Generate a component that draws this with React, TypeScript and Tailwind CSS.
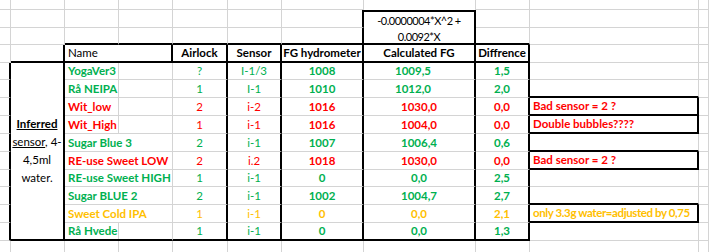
import React, { ReactNode } from "react";

type Bd = "g" | "k" | "t" | "n";

const rCls = (r: Bd) =>
  r === "k"
    ? "border-r-2 border-r-black"
    : r === "t"
    ? "border-r border-r-black"
    : r === "g"
    ? "border-r border-r-[#d4d4d4]"
    : "";
const bCls = (b: Bd) =>
  b === "k"
    ? "border-b-2 border-b-black"
    : b === "t"
    ? "border-b border-b-black"
    : b === "g"
    ? "border-b border-b-[#d4d4d4]"
    : "";

function Cell({
  r = "g",
  b = "g",
  cls = "",
  children,
}: {
  r?: Bd;
  b?: Bd;
  cls?: string;
  children?: ReactNode;
}) {
  return (
    <div className={`flex min-w-0 items-center whitespace-nowrap ${rCls(r)} ${bCls(b)} ${cls}`}>
      {children}
    </div>
  );
}

type Tone = "green" | "red" | "orange";
const tone: Record<Tone, string> = {
  green: "text-[#00b050]",
  red: "text-[#ff0000]",
  orange: "text-[#ffc000]",
};

type Row = {
  name: string;
  air: string;
  sensor: string;
  fg: string;
  calc: string;
  diff: string;
  note?: string;
  t: Tone;
  short?: boolean;
  shiftCalc?: boolean;
  tightNote?: boolean;
};

const rows: Row[] = [
  { name: "YogaVer3", air: "?", sensor: "I-1/3", fg: "1008", calc: "1009,5", diff: "1,5", t: "green", short: true, shiftCalc: true },
  { name: "Rå NEIPA", air: "1", sensor: "I-1", fg: "1010", calc: "1012,0", diff: "2,0", t: "green", short: true, shiftCalc: true },
  { name: "Wit_low", air: "2", sensor: "i-2", fg: "1016", calc: "1030,0", diff: "0,0", note: "Bad sensor = 2 ?", t: "red", short: true },
  { name: "Wit_High", air: "1", sensor: "i-1", fg: "1016", calc: "1004,0", diff: "0,0", note: "Double bubbles????", t: "red", short: true },
  { name: "Sugar Blue 3", air: "2", sensor: "i-1", fg: "1007", calc: "1006,4", diff: "0,6", t: "green" },
  { name: "RE-use Sweet LOW", air: "2", sensor: "i.2", fg: "1018", calc: "1030,0", diff: "0,0", note: "Bad sensor = 2 ?", t: "red" },
  { name: "RE-use Sweet HIGH", air: "1", sensor: "i-1", fg: "0", calc: "0,0", diff: "2,5", t: "green" },
  { name: "Sugar BLUE 2", air: "2", sensor: "i-1", fg: "1002", calc: "1004,7", diff: "2,7", t: "green" },
  { name: "Sweet Cold IPA", air: "1", sensor: "i-1", fg: "0", calc: "0,0", diff: "2,1", note: "only 3.3g water=adjusted by 0,75", t: "orange", tightNote: true },
  { name: "Rå Hvede", air: "1", sensor: "i-1", fg: "0", calc: "0,0", diff: "1,3", t: "green", short: true },
];

function TopRow({ idx }: { idx: number }) {
  const cells: ReactNode[] = [];
  for (let c = 0; c < 11; c++) {
    if (idx === 0) {
      cells.push(<Cell key={c} b={c === 7 ? "n" : "g"} />);
    } else if (idx === 1) {
      if (c === 7) {
        cells.push(
          <div
            key={c}
            className="row-span-2 flex flex-col items-center border-t-2 border-t-black border-r-2 border-r-black border-b-2 border-b-black text-[11px] tracking-[-0.5px] text-black"
          >
            <span className="leading-[16px] pt-[1px] whitespace-nowrap">-0.0000004*X^2 +</span>
            <span className="leading-[16px] whitespace-nowrap">0.0092*X</span>
          </div>
        );
      } else cells.push(<Cell key={c} r={c === 6 ? "k" : "g"} />);
    } else {
      if (c === 7) continue;
      cells.push(
        <Cell key={c} r={c === 6 ? "k" : "g"} b={c >= 2 && c <= 8 ? "k" : "g"} />
      );
    }
  }
  return <>{cells}</>;
}

export default function App() {
  return (
    <div className="w-[709px] h-[252px] overflow-hidden bg-white font-['Lato','Liberation_Sans',sans-serif] text-[11.5px] text-black">
      <div className="grid grid-cols-[11px_54px_54px_54px_55px_54px_82px_112px_54px_169px_10px] grid-rows-[10px_18px_17px_18px_17px_18px_18px_18px_18px_18px_17px_18px_18px_18px_11px]">
        <TopRow idx={0} />
        <TopRow idx={1} />
        <TopRow idx={2} />

        {/* header row */}
        <Cell />
        <Cell r="k" b="k" />
        <Cell r="k" b="k" cls="col-span-2 pl-[3px]">Name</Cell>
        <Cell r="k" b="k" cls="justify-center font-bold">Airlock</Cell>
        <Cell r="k" b="k" cls="justify-center font-bold">Sensor</Cell>
        <Cell r="k" b="k" cls="justify-center font-bold">FG hydrometer</Cell>
        <Cell r="k" b="k" cls="justify-center font-bold">Calculated FG</Cell>
        <Cell r="k" b="k" cls="justify-center font-bold">Diffrence</Cell>
        <Cell />
        <Cell />

        {rows.map((row, i) => {
          const last = i === rows.length - 1;
          const box = !!row.note;
          const nextBox = !!rows[i + 1]?.note;
          const bb: Bd = last ? "k" : "g";
          const tc = tone[row.t];
          return (
            <React.Fragment key={i}>
              <Cell r="k" />
              {i === 0 && (
                <div className="row-span-10 flex flex-col items-center justify-center border-r-2 border-r-black border-b-2 border-b-black text-center text-black">
                  <span className="leading-[18px]">
                    <span className="font-bold underline">Inferred</span>
                  </span>
                  <span className="leading-[18px]">
                    <span className="underline">sensor</span>, 4-
                  </span>
                  <span className="leading-[18px]">4,5ml</span>
                  <span className="leading-[18px]">water.</span>
                </div>
              )}
              <Cell r="g" b={bb} cls={`col-span-2 items-stretch font-bold ${tc}`}>
                <div
                  className={`flex w-[54px] shrink-0 items-center overflow-visible pl-[3px] ${
                    row.short ? "border-r border-r-[#d4d4d4]" : ""
                  }`}
                >
                  {row.name}
                </div>
                <div className="flex-1" />
              </Cell>
              <Cell r="k" b={bb} cls={`justify-center ${tc}`}>{row.air}</Cell>
              <Cell r="k" b={bb} cls={`justify-center ${tc}`}>{row.sensor}</Cell>
              <Cell r="k" b={bb} cls={`justify-center font-bold ${tc}`}>{row.fg}</Cell>
              <Cell r="k" b={bb} cls={`justify-center font-bold ${tc} ${row.shiftCalc ? "pr-[12px]" : ""}`}>
                {row.calc}
              </Cell>
              <Cell r="k" b={bb} cls={`justify-center font-bold ${tc}`}>{row.diff}</Cell>
              <Cell
                r={box ? "k" : "g"}
                b={box || nextBox ? "k" : "g"}
                cls={`pl-[3px] font-bold ${tc} ${row.tightNote ? "tracking-[-0.4px]" : ""}`}
              >
                {row.note}
              </Cell>
              <Cell />
            </React.Fragment>
          );
        })}

        {/* bottom partial row */}
        {Array.from({ length: 11 }).map((_, c) => (
          <Cell key={`b${c}`} b="n" />
        ))}
      </div>
    </div>
  );
}
